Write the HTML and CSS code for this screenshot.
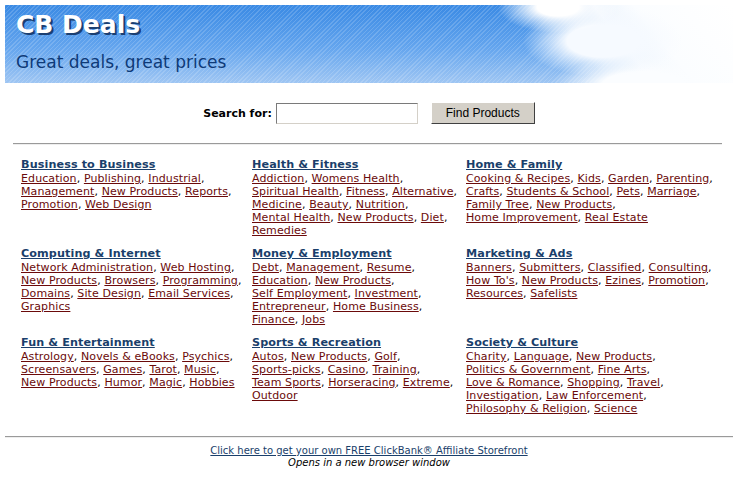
FILE: index.html
```html
<!DOCTYPE html>
<html>
<head>
<meta charset="utf-8">
<link rel="stylesheet" href="styles.css">
</head>
<body>
<div class="page">
  <div class="banner">
    <div class="cloud"></div>
    <div class="title">CB Deals</div>
    <div class="subtitle">Great deals, great prices</div>
  </div>
  <form class="search">
    <label class="search-label">Search for:</label>
    <input class="search-input" type="text">
    <button class="search-btn" type="button">Find Products</button>
  </form>
  <hr class="rule-top">
  <div class="cats">
    <div class="cat">
      <a class="cat-title" href="#">Business to Business</a>
      <div class="links"><a href="#">Education</a>, <a href="#">Publishing</a>, <a href="#">Industrial</a>,<br><a href="#">Management</a>, <a href="#">New Products</a>, <a href="#">Reports</a>,<br><a href="#">Promotion</a>, <a href="#">Web Design</a></div>
    </div>
    <div class="cat">
      <a class="cat-title" href="#">Health &amp; Fitness</a>
      <div class="links"><a href="#">Addiction</a>, <a href="#">Womens Health</a>,<br><a href="#">Spiritual Health</a>, <a href="#">Fitness</a>, <a href="#">Alternative</a>,<br><a href="#">Medicine</a>, <a href="#">Beauty</a>, <a href="#">Nutrition</a>,<br><a href="#">Mental Health</a>, <a href="#">New Products</a>, <a href="#">Diet</a>,<br><a href="#">Remedies</a></div>
    </div>
    <div class="cat">
      <a class="cat-title" href="#">Home &amp; Family</a>
      <div class="links"><a href="#">Cooking &amp; Recipes</a>, <a href="#">Kids</a>, <a href="#">Garden</a>, <a href="#">Parenting</a>,<br><a href="#">Crafts</a>, <a href="#">Students &amp; School</a>, <a href="#">Pets</a>, <a href="#">Marriage</a>,<br><a href="#">Family Tree</a>, <a href="#">New Products</a>,<br><a href="#">Home Improvement</a>, <a href="#">Real Estate</a></div>
    </div>
    <div class="cat">
      <a class="cat-title" href="#">Computing &amp; Internet</a>
      <div class="links"><a href="#">Network Administration</a>, <a href="#">Web Hosting</a>,<br><a href="#">New Products</a>, <a href="#">Browsers</a>, <a href="#">Programming</a>,<br><a href="#">Domains</a>, <a href="#">Site Design</a>, <a href="#">Email Services</a>,<br><a href="#">Graphics</a></div>
    </div>
    <div class="cat">
      <a class="cat-title" href="#">Money &amp; Employment</a>
      <div class="links"><a href="#">Debt</a>, <a href="#">Management</a>, <a href="#">Resume</a>,<br><a href="#">Education</a>, <a href="#">New Products</a>,<br><a href="#">Self Employment</a>, <a href="#">Investment</a>,<br><a href="#">Entrepreneur</a>, <a href="#">Home Business</a>,<br><a href="#">Finance</a>, <a href="#">Jobs</a></div>
    </div>
    <div class="cat">
      <a class="cat-title" href="#">Marketing &amp; Ads</a>
      <div class="links"><a href="#">Banners</a>, <a href="#">Submitters</a>, <a href="#">Classified</a>, <a href="#">Consulting</a>,<br><a href="#">How To's</a>, <a href="#">New Products</a>, <a href="#">Ezines</a>, <a href="#">Promotion</a>,<br><a href="#">Resources</a>, <a href="#">Safelists</a></div>
    </div>
    <div class="cat">
      <a class="cat-title" href="#">Fun &amp; Entertainment</a>
      <div class="links"><a href="#">Astrology</a>, <a href="#">Novels &amp; eBooks</a>, <a href="#">Psychics</a>,<br><a href="#">Screensavers</a>, <a href="#">Games</a>, <a href="#">Tarot</a>, <a href="#">Music</a>,<br><a href="#">New Products</a>, <a href="#">Humor</a>, <a href="#">Magic</a>, <a href="#">Hobbies</a></div>
    </div>
    <div class="cat">
      <a class="cat-title" href="#">Sports &amp; Recreation</a>
      <div class="links"><a href="#">Autos</a>, <a href="#">New Products</a>, <a href="#">Golf</a>,<br><a href="#">Sports-picks</a>, <a href="#">Casino</a>, <a href="#">Training</a>,<br><a href="#">Team Sports</a>, <a href="#">Horseracing</a>, <a href="#">Extreme</a>,<br><a href="#">Outdoor</a></div>
    </div>
    <div class="cat">
      <a class="cat-title" href="#">Society &amp; Culture</a>
      <div class="links"><a href="#">Charity</a>, <a href="#">Language</a>, <a href="#">New Products</a>,<br><a href="#">Politics &amp; Government</a>, <a href="#">Fine Arts</a>,<br><a href="#">Love &amp; Romance</a>, <a href="#">Shopping</a>, <a href="#">Travel</a>,<br><a href="#">Investigation</a>, <a href="#">Law Enforcement</a>,<br><a href="#">Philosophy &amp; Religion</a>, <a href="#">Science</a></div>
    </div>
  </div>
  <hr class="rule-bottom">
  <div class="footer">
    <a class="footer-link" href="#">Click here to get your own FREE ClickBank® Affiliate Storefront</a>
    <div class="footer-note">Opens in a new browser window</div>
  </div>
</div>
</body>
</html>
```
FILE: styles.css
```css
html, body {
  margin: 0;
  padding: 0;
  background: #ffffff;
}
body {
  font-family: "DejaVu Sans", Verdana, sans-serif;
  font-size: 11px;
  color: #000;
}
.page {
  padding: 5px 10px 0 5px;
}
.banner {
  position: relative;
  height: 78px;
  width: 728px;
  overflow: hidden;
  background:
    repeating-linear-gradient(135deg, rgba(255,255,255,0.16) 0 1px, rgba(255,255,255,0) 1px 3px),
    linear-gradient(180deg, #3a8ae4 0%, #64a5ee 55%, #9fc6f3 100%);
}
.cloud {
  position: absolute;
  top: 0;
  right: 0;
  width: 250px;
  height: 78px;
  background:
    radial-gradient(ellipse 60px 26px at 75px 2px, #ffffff 35%, rgba(255,255,255,0) 100%),
    radial-gradient(ellipse 80px 36px at 120px 36px, #f6faff 45%, rgba(255,255,255,0) 100%),
    radial-gradient(ellipse 90px 30px at 160px 80px, #fbfdff 45%, rgba(255,255,255,0) 100%),
    linear-gradient(52deg, rgba(255,255,255,0) 40%, rgba(244,249,255,0.95) 55%, #fbfdff 68%, #ffffff 100%);
}
.title {
  position: relative;
  margin: 5px 0 0 11px;
  font-family: "DejaVu Sans", Verdana, sans-serif;
  font-weight: bold;
  font-size: 25px;
  line-height: 30px;
  color: #ffffff;
  text-shadow: 2px 2px 0 #1b3f72;
}
.subtitle {
  position: relative;
  margin: 12px 0 0 11px;
  font-size: 17px;
  line-height: 20px;
  color: #0e3a78;
}
.search {
  display: flex;
  align-items: center;
  justify-content: center;
  margin: 18px 0 0 0;
  width: 728px;
  height: 24px;
}
.search-label {
  font-weight: bold;
  font-size: 11px;
  margin-right: 4px;
}
.search-input {
  box-sizing: border-box;
  width: 142px;
  height: 21px;
  margin: 0 13px 0 0;
  border: 1px solid #7a7a7a;
  border-right-color: #d4d0c8;
  border-bottom-color: #d4d0c8;
  background: #fff;
  padding: 0;
}
.search-btn {
  box-sizing: border-box;
  width: 104px;
  height: 22px;
  background: #d4d0c8;
  border: 1px solid;
  border-color: #ffffff #404040 #404040 #ffffff;
  font-family: "Liberation Sans", Arial, sans-serif;
  font-size: 12px;
  color: #000;
  padding: 0;
}
.rule-top {
  margin: 18px 0 0 8px;
  width: 709px;
  border: 0;
  border-top: 1px solid #9a9a9a;
  border-bottom: 1px solid #eeeeee;
  height: 0;
}
.cats {
  display: grid;
  grid-template-columns: 231px 214px auto;
  margin: 13px 0 0 16px;
  row-gap: 0;
}
.cat {
  min-height: 89px;
  line-height: 13px;
}
.cat-title {
  display: block;
  width: max-content;
  font-weight: bold;
  font-size: 11.2px;
  line-height: 14px;
  letter-spacing: 0.1px;
  color: #1a3f6b;
  text-decoration: underline;
}
.links {
  letter-spacing: 0.1px;
}
.links a {
  color: #6b0a0a;
  text-decoration: underline;
}
.rule-bottom {
  margin: 11px 0 0 0;
  width: 728px;
  border: 0;
  border-top: 1px solid #9a9a9a;
  border-bottom: 1px solid #eeeeee;
  height: 0;
}
.footer {
  width: 728px;
  text-align: center;
  margin-top: 7px;
  line-height: 12px;
  font-size: 10px;
}
.footer-link {
  color: #1a3f6b;
  text-decoration: underline;
}
.footer-note {
  font-style: italic;
  color: #000;
}
```
